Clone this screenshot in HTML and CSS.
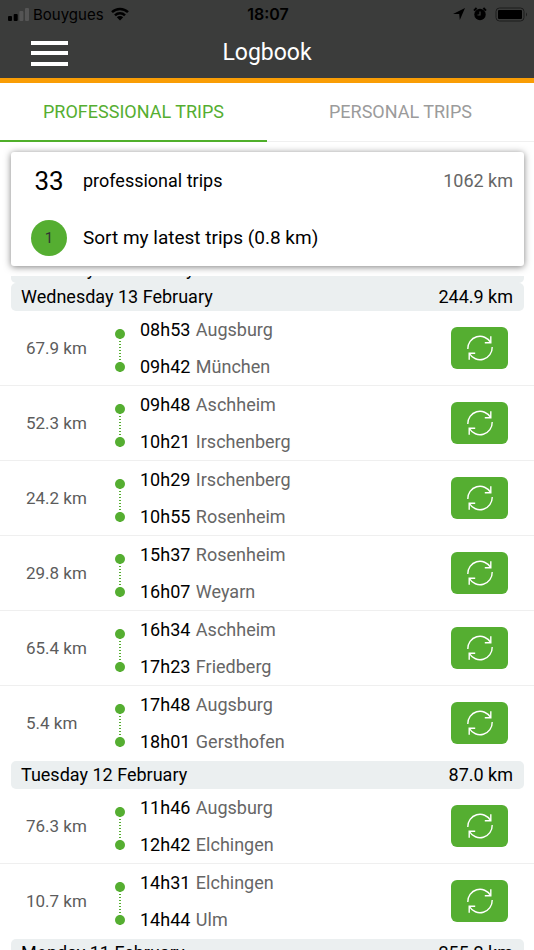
FILE: index.html
```html
<!DOCTYPE html>
<html lang="en">
<head>
  <meta charset="UTF-8">
  <meta name="viewport" content="width=device-width, initial-scale=1">
  <title>Logbook</title>
  <link rel="stylesheet" href="styles.css">
</head>
<body>

  <svg class="sprite" aria-hidden="true">
    <symbol id="sync" viewBox="0 0 28 28">
      <path d="M1.800 15A12.200 12.200 0 0 1 24.600 8.500M24.800 2.300V8.700H18.800" />
      <path d="M26.200 13A12.200 12.200 0 0 1 3.400 19.500M3.200 25.700V19.300H9.200" />
    </symbol>
  </svg>

  <header class="header">
    <div class="status">
      <div class="status-left">
        <svg width="21" height="14" viewBox="0 0 21 14" aria-hidden="true">
          <rect x="0" y="9" width="4" height="5" rx="1" />
          <rect x="5.700" y="7" width="4" height="7" rx="1" />
          <rect class="dim" x="11.400" y="4" width="4" height="10" rx="1" />
          <rect class="dim" x="17" y="1" width="4" height="13" rx="1" />
        </svg>
        <span>Bouygues</span>
        <svg class="wifi" width="18" height="14" viewBox="0 0 18 14" aria-hidden="true">
          <path d="M1 5.200A11.500 11.500 0 0 1 17 5.200M4 8.300A7.200 7.200 0 0 1 14 8.300" />
          <path class="solid" d="M5.800 10.300A4.600 4.600 0 0 1 12.200 10.300L9 13.500Z" />
        </svg>
      </div>
      <div class="clock">18:07</div>
      <div class="status-right">
        <svg width="12" height="12" viewBox="0 0 12 12" aria-hidden="true">
          <path d="M12 0L6.800 12L6.200 6H0Z" />
        </svg>
        <svg width="14" height="14" viewBox="0 0 14 14" aria-hidden="true">
          <circle cx="7" cy="7.500" r="5.700" />
          <path d="M1 3.600L3.600 1M10.400 1L13 3.600" stroke="#000" stroke-width="2" />
          <path d="M7 4.500V8H4.500" fill="none" stroke="#3b3c3b" stroke-width="1.200" />
        </svg>
        <svg width="33" height="15" viewBox="0 0 33 15" aria-hidden="true">
          <rect x="1" y="1" width="28" height="13" rx="3.500" fill="none" stroke="#1c1c1c" stroke-width="1" />
          <rect x="3" y="3" width="24" height="9" rx="1" />
          <path d="M31 5.500Q33 7.500 31 9.500Z" fill="#1c1c1c" />
        </svg>
      </div>
    </div>
    <div class="title-bar">
      <button class="menu" type="button" aria-label="Menu"><span></span><span></span><span></span></button>
      <h1>Logbook</h1>
    </div>
  </header>

  <nav class="tabs">
    <button class="tab active" type="button">PROFESSIONAL TRIPS</button>
    <button class="tab" type="button">PERSONAL TRIPS</button>
  </nav>

  <section class="summary">
    <div class="summary-row">
      <span class="count">33</span>
      <span>professional trips</span>
      <span class="total">1062 km</span>
    </div>
    <a class="summary-row sort" href="#">
      <span class="badge">1</span>
      <span>Sort my latest trips (0.8 km)</span>
    </a>
  </section>

  <main class="list">
    <h2 class="day scrolled"><span>Thursday 14 February</span></h2>

    <h2 class="day"><span>Wednesday 13 February</span><span>244.9 km</span></h2>
    <ul>
      <li class="trip">
        <span class="distance">67.9 km</span>
        <span class="track"></span>
        <div class="stops"><p><b>08h53</b> Augsburg</p><p><b>09h42</b> München</p></div>
        <button class="switch" type="button" aria-label="Change trip type"><svg><use href="#sync" /></svg></button>
      </li>
      <li class="trip">
        <span class="distance">52.3 km</span>
        <span class="track"></span>
        <div class="stops"><p><b>09h48</b> Aschheim</p><p><b>10h21</b> Irschenberg</p></div>
        <button class="switch" type="button" aria-label="Change trip type"><svg><use href="#sync" /></svg></button>
      </li>
      <li class="trip">
        <span class="distance">24.2 km</span>
        <span class="track"></span>
        <div class="stops"><p><b>10h29</b> Irschenberg</p><p><b>10h55</b> Rosenheim</p></div>
        <button class="switch" type="button" aria-label="Change trip type"><svg><use href="#sync" /></svg></button>
      </li>
      <li class="trip">
        <span class="distance">29.8 km</span>
        <span class="track"></span>
        <div class="stops"><p><b>15h37</b> Rosenheim</p><p><b>16h07</b> Weyarn</p></div>
        <button class="switch" type="button" aria-label="Change trip type"><svg><use href="#sync" /></svg></button>
      </li>
      <li class="trip">
        <span class="distance">65.4 km</span>
        <span class="track"></span>
        <div class="stops"><p><b>16h34</b> Aschheim</p><p><b>17h23</b> Friedberg</p></div>
        <button class="switch" type="button" aria-label="Change trip type"><svg><use href="#sync" /></svg></button>
      </li>
      <li class="trip">
        <span class="distance">5.4 km</span>
        <span class="track"></span>
        <div class="stops"><p><b>17h48</b> Augsburg</p><p><b>18h01</b> Gersthofen</p></div>
        <button class="switch" type="button" aria-label="Change trip type"><svg><use href="#sync" /></svg></button>
      </li>
    </ul>

    <h2 class="day"><span>Tuesday 12 February</span><span>87.0 km</span></h2>
    <ul>
      <li class="trip">
        <span class="distance">76.3 km</span>
        <span class="track"></span>
        <div class="stops"><p><b>11h46</b> Augsburg</p><p><b>12h42</b> Elchingen</p></div>
        <button class="switch" type="button" aria-label="Change trip type"><svg><use href="#sync" /></svg></button>
      </li>
      <li class="trip">
        <span class="distance">10.7 km</span>
        <span class="track"></span>
        <div class="stops"><p><b>14h31</b> Elchingen</p><p><b>14h44</b> Ulm</p></div>
        <button class="switch" type="button" aria-label="Change trip type"><svg><use href="#sync" /></svg></button>
      </li>
    </ul>

    <h2 class="day"><span>Monday 11 February</span><span>255.2 km</span></h2>
  </main>

</body>
</html>
```

FILE: styles.css
```css
* {
  box-sizing: border-box;
}

body {
  display: flex;
  flex-direction: column;
  height: 100vh;
  margin: 0;
  font-family: Roboto, Arial, sans-serif;
  font-size: 18px;
  color: #000;
  background: #fff;
}

button {
  padding: 0;
  border: none;
  background: none;
  font: inherit;
  cursor: pointer;
}

h1, h2, p, ul {
  margin: 0;
  padding: 0;
  font-weight: normal;
}

.sprite {
  display: none;
}

/* header */
.header {
  flex: none;
  background: #3b3c3b;
  border-bottom: 5px solid #f99d05;
}

.status {
  display: grid;
  grid-template-columns: 1fr auto 1fr;
  align-items: center;
  height: 28px;
  padding: 0 6px 0 8px;
  font-family: Inter, sans-serif;
  font-size: 15px;
}

.status-left, .status-right {
  display: flex;
  align-items: center;
  gap: 4px;
}

.status-right {
  justify-content: flex-end;
  gap: 8px;
}

.status .dim {
  fill: #555;
}

.wifi {
  margin-left: 3px;
  fill: none;
  stroke: #000;
  stroke-width: 2.5;
}

.wifi .solid {
  fill: #000;
  stroke: none;
}

.clock {
  font-size: 16px;
  font-weight: 600;
}

.title-bar {
  display: grid;
  grid-template-columns: 1fr auto 1fr;
  align-items: center;
  height: 50px;
  padding: 0 31px;
}

.title-bar h1 {
  font-size: 23px;
  line-height: 50px;
  color: #fff;
}

.menu {
  display: flex;
  flex-direction: column;
  justify-content: space-between;
  width: 37px;
  height: 25px;
}

.menu span {
  width: 100%;
  height: 4px;
  background: #fff;
}

/* tabs */
.tabs {
  display: flex;
  flex: none;
}

.tab {
  flex: 1;
  height: 59px;
  padding-bottom: 1px;
  border-bottom: 1px solid #f0f0f0;
  color: #9b9b9b;
}

.tab.active {
  padding-bottom: 0;
  border-bottom: 2px solid #4faf2a;
  color: #55ae31;
}

/* summary card */
.summary {
  flex: none;
  margin: 10px 10px 10px 11px;
  border-radius: 3px;
  box-shadow: 0 1px 7px rgba(0, 0, 0, 0.5);
}

.summary-row {
  display: flex;
  align-items: center;
  gap: 16px;
  height: 57px;
  padding: 0 11px 0 20px;
}

.sort {
  font-size: 19px;
  color: inherit;
  text-decoration: none;
}

.count, .badge {
  width: 36px;
  text-align: center;
}

.count {
  font-size: 26px;
}

.badge {
  border-radius: 50%;
  background: #55ae31;
  font-size: 15px;
  line-height: 36px;
  color: #333;
}

.total {
  margin-left: auto;
  color: #666;
}

/* trips, grouped by day */
.list {
  flex: 1;
  min-height: 0;
  overflow-y: auto;
  scrollbar-width: none;
}

.day {
  display: flex;
  justify-content: space-between;
  margin: 0 10px 0 11px;
  padding: 0 11px 0 10px;
  border-radius: 5px;
  background: #ebeff0;
  font-size: 18px;
  line-height: 28px;
}

.day.scrolled {
  margin-top: -21px;
}

.trip {
  display: flex;
  align-items: center;
  padding: 0 26px;
  border-bottom: 1px solid #efefef;
}

.trip:last-child {
  border-bottom-color: transparent;
}

.distance {
  width: 89px;
  font-size: 17px;
  color: #5c5c5c;
}

.track {
  display: flex;
  flex-direction: column;
  align-items: center;
  justify-content: space-between;
  width: 10px;
  height: 43px;
  margin-top: 4px;
  background: repeating-linear-gradient(#55ae31 0 1px, transparent 1px 3px) center / 2px 100% no-repeat;
}

.track::before, .track::after {
  content: "";
  width: 10px;
  height: 10px;
  border-radius: 50%;
  background: #55ae31;
}

.stops {
  flex: 1;
  margin-left: 15px;
  line-height: 37px;
  color: #666;
}

.stops b {
  margin-right: 1px;
  font-weight: normal;
  color: #000;
}

.switch {
  display: flex;
  align-items: center;
  justify-content: center;
  width: 57px;
  height: 42px;
  border-radius: 6px;
  background: #55ae31;
}

.switch svg {
  width: 28px;
  height: 28px;
  fill: none;
  stroke: #fff;
  stroke-width: 1.4;
}
```
